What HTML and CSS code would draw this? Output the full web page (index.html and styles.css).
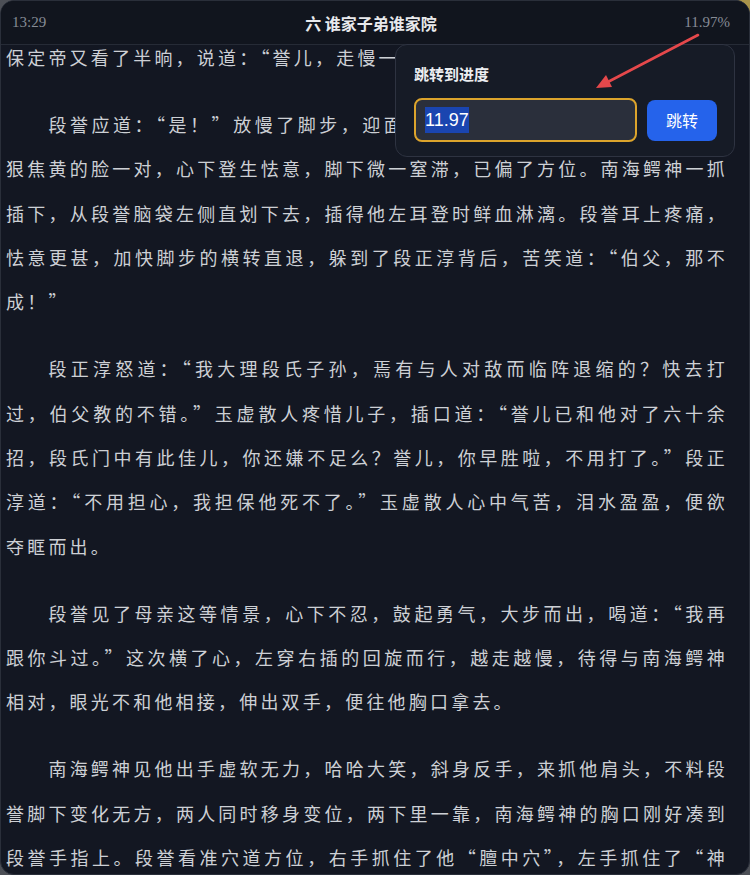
FILE: index.html
```html
<!DOCTYPE html>
<html lang="zh-CN">
<head>
    <meta charset="UTF-8">
    <meta name="viewport" content="width=device-width, initial-scale=1.0">
    <title>六 谁家子弟谁家院</title>
    <link rel="stylesheet" href="styles.css">
</head>
<body>

<div class="reader">
    <div class="topbar">
        <span class="clock">13:29</span>
        <span class="chapter">六 谁家子弟谁家院</span>
        <span class="percent">11.97%</span>
    </div>

    <div class="page">
        <div class="text">
            <p class="tail">保定帝又看了半晌，说道：“誉儿，走慢一点，别慌，照着步法一步步走。”</p>
            <p>段誉应道：“是！”放慢了脚步，迎面一抬头，却正好和南海鳄神那张凶狠焦黄的脸一对，心下登生怯意，脚下微一窒滞，已偏了方位。南海鳄神一抓插下，从段誉脑袋左侧直划下去，插得他左耳登时鲜血淋漓。段誉耳上疼痛，怯意更甚，加快脚步的横转直退，躲到了段正淳背后，苦笑道：“伯父，那不成！”</p>
            <p>段正淳怒道：“我大理段氏子孙，焉有与人对敌而临阵退缩的？快去打过，伯父教的不错。”玉虚散人疼惜儿子，插口道：“誉儿已和他对了六十余招，段氏门中有此佳儿，你还嫌不足么？誉儿，你早胜啦，不用打了。”段正淳道：“不用担心，我担保他死不了。”玉虚散人心中气苦，泪水盈盈，便欲夺眶而出。</p>
            <p>段誉见了母亲这等情景，心下不忍，鼓起勇气，大步而出，喝道：“我再跟你斗过。”这次横了心，左穿右插的回旋而行，越走越慢，待得与南海鳄神相对，眼光不和他相接，伸出双手，便往他胸口拿去。</p>
            <p>南海鳄神见他出手虚软无力，哈哈大笑，斜身反手，来抓他肩头，不料段誉脚下变化无方，两人同时移身变位，两下里一靠，南海鳄神的胸口刚好凑到段誉手指上。段誉看准穴道方位，右手抓住了他“膻中穴”，左手抓住了“神封穴”，两处穴道同时受制，南海鳄神登时全身酸软。</p>
        </div>
    </div>

    <!-- 跳转弹窗 -->
    <div class="jump">
        <div class="jump-title">跳转到进度</div>
        <div class="jump-row">
            <div class="jump-input"><span class="sel">11.97</span></div>
            <button class="jump-btn">跳转</button>
        </div>
    </div>

    <svg class="pointer" width="750" height="120" viewBox="0 0 750 120">
        <line x1="698" y1="35" x2="604" y2="84" stroke="#e5484b" stroke-width="2.6" stroke-linecap="round"/>
        <polygon points="596,88 612,87 606,75" fill="#e5484b"/>
    </svg>
</div>

</body>
</html>
```

FILE: styles.css
```css
body {
    margin: 0;
    padding: 0;
    background: radial-gradient(circle at 750px 0, #a8934a 0, #a8934a 9px, transparent 13px), #4c4f56;
    font-family: "Noto Sans CJK SC", "Noto Sans", sans-serif;
}
.reader {
    position: relative;
    width: 750px;
    height: 875px;
    box-sizing: border-box;
    border: 1px solid #2a2f3a;
    border-radius: 14px;
    background: #131722;
    overflow: hidden;
    display: flex;
    flex-direction: column;
}
.topbar {
    flex: none;
    height: 43px;
    display: grid;
    grid-template-columns: 1fr auto 1fr;
    align-items: center;
    padding: 0 19px 0 11px;
    background: #11151e;
    border-bottom: 1px solid #262b36;
    position: relative;
    z-index: 1;
}
.clock, .percent {
    font-family: "Liberation Serif", "DejaVu Serif", serif;
    font-size: 15px;
    color: #878c96;
}
.percent {
    text-align: right;
}
.chapter {
    font-size: 16px;
    font-weight: bold;
    color: #e8e9ec;
}
.page {
    flex: 1;
    overflow: hidden;
    padding: 0 0 0 5px;
}
.text {
    width: 722px;
    margin-top: -10px;
    color: #cdd0d5;
    font-size: 18px;
    letter-spacing: 3.2px;
    line-height: 44.4px;
    text-align: justify;
}
.text p {
    margin: 0 0 22.4px;
    text-indent: 42.4px;
}
.text p.tail {
    text-indent: 0;
}
.jump {
    position: absolute;
    top: 43px;
    left: 394px;
    width: 340px;
    box-sizing: border-box;
    padding: 18px 17px 14px 18px;
    background: #161b26;
    border: 1px solid #2e3341;
    border-radius: 12px;
    z-index: 2;
}
.jump-title {
    font-size: 15px;
    font-weight: bold;
    color: #eceef1;
    line-height: 22px;
}
.jump-row {
    display: flex;
    align-items: center;
    gap: 10px;
    margin-top: 13px;
}
.jump-input {
    width: 224px;
    height: 44px;
    box-sizing: border-box;
    border: 2px solid #dca42c;
    border-radius: 8px;
    background: #2a2f3b;
    display: flex;
    align-items: center;
    padding-left: 9px;
}
.sel {
    font-family: "Liberation Sans", Arial, sans-serif;
    font-size: 18px;
    line-height: 26px;
    color: #ffffff;
    background: #1a45b0;
}
.jump-btn {
    width: 70px;
    height: 41px;
    border: none;
    border-radius: 8px;
    background: #2563eb;
    color: #ffffff;
    font-family: "Noto Sans CJK SC", sans-serif;
    font-size: 16px;
    cursor: pointer;
}
.pointer {
    position: absolute;
    top: -1px;
    left: -1px;
    z-index: 3;
    pointer-events: none;
}
```
